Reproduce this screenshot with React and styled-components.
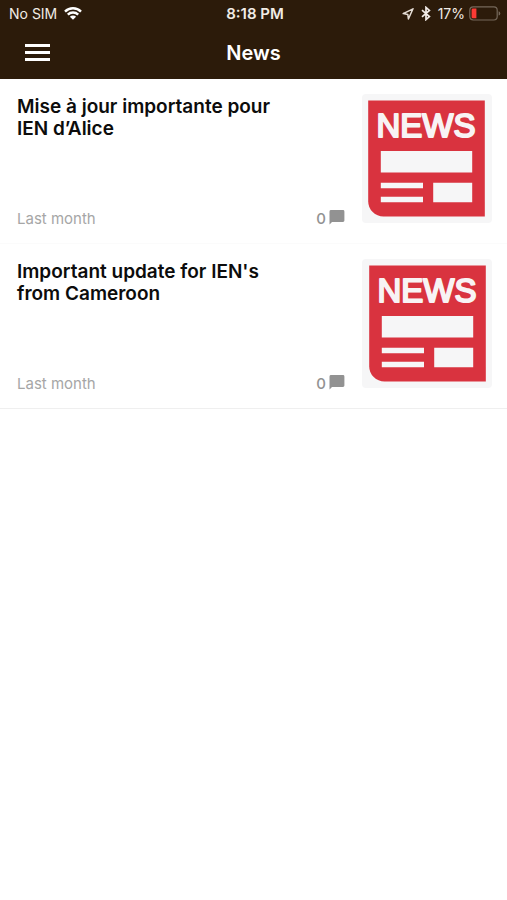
import React from "react";
import styled, { createGlobalStyle } from "styled-components";

const ARTICLES = [
  {
    id: 1,
    title: "Mise à jour importante pour IEN d’Alice",
    date: "Last month",
    comments: 0,
    artX: 0,
  },
  {
    id: 2,
    title: "Important update for IEN's from Cameroon",
    date: "Last month",
    comments: 0,
    artX: 1,
  },
];

const WifiIcon = () => (
  <svg width="18" height="14" viewBox="0 0 18 14" fill="none" aria-hidden="true">
    <g stroke="#fff" strokeWidth="2.4">
      <path d="M1 4.6a11.3 11.3 0 0 1 16 0" />
      <path d="M3.8 7.7a7.4 7.4 0 0 1 10.4 0" />
    </g>
    <path d="M9 12.8 5.9 9.7a4.4 4.4 0 0 1 6.2 0z" fill="#fff" />
  </svg>
);

const LocationIcon = () => (
  <svg width="12" height="12" viewBox="0 0 12 12" fill="none" aria-hidden="true">
    <path
      d="M11 .8 1.2 5.6l4.6.8.6 4.6z"
      stroke="#e6ded6"
      strokeWidth="1.5"
      strokeLinejoin="round"
    />
  </svg>
);

const BluetoothIcon = () => (
  <svg width="10" height="15" viewBox="0 0 10 15" fill="none" aria-hidden="true">
    <path
      d="M1 4.2 8.4 10.6 5 13.6V1.4l3.4 3L1 10.8"
      stroke="#f2ece8"
      strokeWidth="1.7"
    />
  </svg>
);

const BatteryIcon = () => (
  <svg width="32" height="15" viewBox="0 0 32 15" fill="none" aria-hidden="true">
    <rect x="0.8" y="0.8" width="27.4" height="13.2" rx="3.4" stroke="#75685a" strokeWidth="1.2" />
    <path d="M2.6 3.9q0-1.3 1.3-1.3H7.4v9.6H3.9q-1.3 0-1.3-1.3z" fill="#fb3a34" />
    <path d="M29.6 5.2q1.7.5 1.7 2.2t-1.7 2.2z" fill="#75685a" />
  </svg>
);

const MenuIcon = () => (
  <svg width="25" height="18" viewBox="0 0 25 18" aria-hidden="true">
    <path d="M0 0h25v3H0zM0 7h25v3H0zM0 14h25v3H0z" fill="#fff" />
  </svg>
);

const CommentIcon = () => (
  <svg width="16" height="18" viewBox="0 0 16 18" aria-hidden="true">
    <path d="M2 0h12a1.4 1.4 0 0 1 1.4 1.4v9.2A1.4 1.4 0 0 1 14 12H3L.5 14.4V1.4A1.5 1.5 0 0 1 2 0z" fill="#929292" />
  </svg>
);

const NewsArt = ({ x }) => (
  <Art viewBox="0 0 130 129" role="img" aria-label="News">
    <g transform={`translate(${x} 0)`}>
      <path d="M6.2 6.4h116.6v116.2H21.5A15.3 15.3 0 0 1 6.2 107.3z" fill="#d9333f" />
      <text
        x="64"
        y="42.6"
        textAnchor="middle"
        fontFamily="'Liberation Sans', Arial, sans-serif"
        fontSize="33"
        fill="#f8f3f4"
        stroke="#f8f3f4"
        strokeWidth="2"
        strokeLinejoin="round"
      >
        NEWS
      </text>
      <path
        d="M18.8 57h91.4v21.4H18.8zM18.8 88.8H61v5.4H18.8zM18.8 102.8H61v5.4H18.8zM71.2 88.8h39v19.4h-39z"
        fill="#f6f6f7"
      />
    </g>
  </Art>
);

const NewsItem = ({ title, date, comments, artX }) => {
  return (
    <Item>
      <Details>
        <Title>{title}</Title>
        <Meta>
          <Published>{date}</Published>
          <Comments>
            {comments}
            <CommentIcon />
          </Comments>
        </Meta>
      </Details>
      <NewsArt x={artX} />
    </Item>
  );
};

const App = () => {
  return (
    <Page>
      <GlobalStyle />
      <Header>
        <StatusBar>
          <StatusGroup>
            No SIM
            <WifiIcon />
          </StatusGroup>
          <Clock>8:18 PM</Clock>
          <StatusGroup $end>
            <LocationIcon />
            <BluetoothIcon />
            <Battery>
              17%
              <BatteryIcon />
            </Battery>
          </StatusGroup>
        </StatusBar>
        <NavBar>
          <MenuButton type="button" aria-label="Menu">
            <MenuIcon />
          </MenuButton>
          <Heading>News</Heading>
        </NavBar>
      </Header>
      <List>
        {ARTICLES.map((article) => (
          <NewsItem key={article.id} {...article} />
        ))}
      </List>
    </Page>
  );
};

export default App;

const GlobalStyle = createGlobalStyle`
  * {
    box-sizing: border-box;
  }
  body {
    margin: 0;
    background: #fff;
    font-family: Inter, "Liberation Sans", sans-serif;
  }
`;

const Page = styled.div`
  min-height: 100vh;
  background: #fff;
`;

const Header = styled.header`
  background: #2c1b0a;
  color: #fff;
`;

const StatusBar = styled.div`
  display: grid;
  grid-template-columns: 1fr auto 1fr;
  align-items: center;
  height: 27px;
  padding: 0 6px 0 9px;
  font-size: 14px;
  line-height: 20px;
  color: #f1ebe5;
`;

const StatusGroup = styled.div`
  display: flex;
  align-items: center;
  gap: 7px;
  justify-content: ${({ $end }) => ($end ? "flex-end" : "flex-start")};
`;

const Clock = styled.span`
  font-size: 15px;
  font-weight: 600;
`;

const Battery = styled.span`
  display: flex;
  align-items: center;
  gap: 4px;
`;

const NavBar = styled.div`
  display: grid;
  grid-template-columns: 1fr auto 1fr;
  align-items: center;
  height: 52px;
  padding: 0 17px;
`;

const MenuButton = styled.button`
  display: flex;
  justify-self: start;
  padding: 8px;
  border: 0;
  background: none;
  cursor: pointer;
`;

const Heading = styled.h1`
  margin: 0;
  font-size: 20px;
  line-height: 24px;
  font-weight: 600;
`;

const List = styled.main`
  display: flex;
  flex-direction: column;
`;

const Item = styled.article`
  display: flex;
  gap: 16px;
  padding: 15px 15px 15px 17px;
  border-bottom: 1px solid #fbfbfb;
  &:last-child {
    border-bottom-color: #efefef;
  }
`;

const Details = styled.div`
  flex: 1;
  display: flex;
  flex-direction: column;
  justify-content: space-between;
  padding-top: 2px;
`;

const Title = styled.h2`
  max-width: 264px;
  margin: 0;
  font-size: 19px;
  line-height: 22px;
  font-weight: 600;
  color: #0c0c0c;
`;

const Meta = styled.div`
  display: flex;
  align-items: center;
  justify-content: space-between;
  font-size: 15px;
  line-height: 16px;
  color: #929292;
`;

const Published = styled.span`
  color: #a6a6a6;
`;

const Comments = styled.span`
  display: flex;
  align-items: center;
  gap: 3px;
  padding-right: 1px;
  font-weight: 500;
`;

const Art = styled.svg`
  flex: none;
  width: 130px;
  height: 129px;
  margin-bottom: 5px;
  border-radius: 4px;
  background: #f6f6f7;
`;
